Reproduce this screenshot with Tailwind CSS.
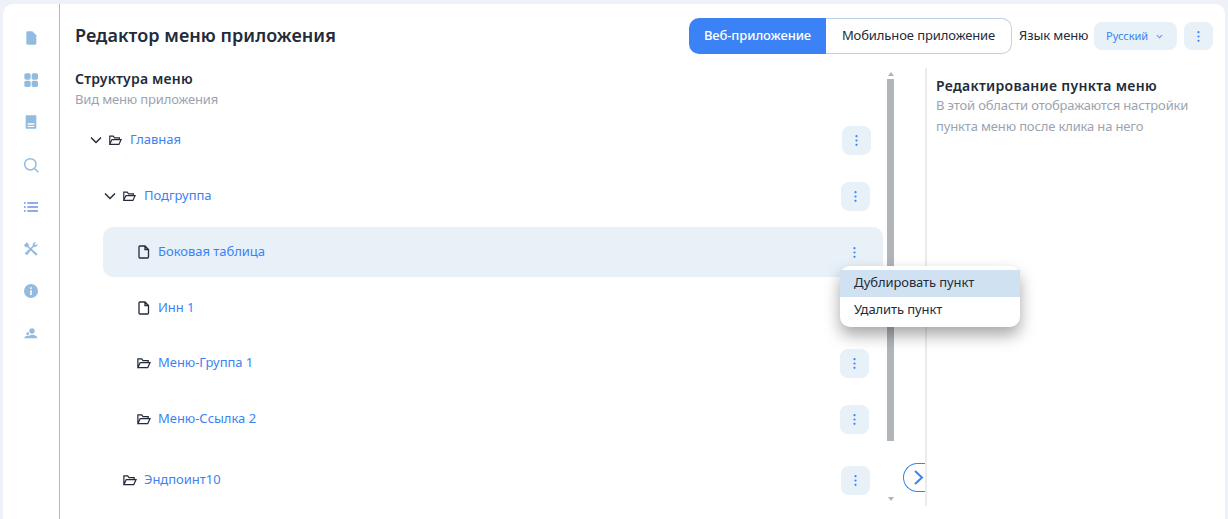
<!DOCTYPE html>
<html lang="ru">
<head>
    <meta charset="UTF-8">
    <script src="https://cdn.jsdelivr.net/npm/@tailwindcss/browser@4"></script>
    <title>Редактор меню приложения</title>
</head>
<body class="bg-[#eef2f8] overflow-hidden font-['Noto_Sans',sans-serif]">
    <!-- card -->
    <div class="relative flex w-[1222px] h-[515px] ml-[3px] mt-[4px] bg-white rounded-tl-[10px] rounded-tr-[10px]">

        <!-- sidebar -->
        <div class="w-[57px] h-full border-r border-[#9dbbd8] flex flex-col items-center pt-[26px] gap-[26px] text-[#93bbe0] shrink-0">
            <svg class="w-[16px] h-[16px]" viewBox="0 0 24 24" fill="currentColor"><path d="M7 2h7l6 6v12a2 2 0 0 1-2 2H7a2 2 0 0 1-2-2V4a2 2 0 0 1 2-2z"/></svg>
            <svg class="w-[16px] h-[16px]" viewBox="0 0 24 24" fill="currentColor"><rect x="2" y="2" width="9.500" height="9.500" rx="2.500"/><rect x="13" y="2" width="9.500" height="9.500" rx="2.500"/><rect x="2" y="13" width="9.500" height="9.500" rx="2.500"/><rect x="13" y="13" width="9.500" height="9.500" rx="2.500"/></svg>
            <svg class="w-[16px] h-[16px]" viewBox="0 0 24 24" fill="currentColor"><path fill-rule="evenodd" d="M5 2h14a1 1 0 0 1 1 1v18a1 1 0 0 1-1 1H5a1 1 0 0 1-1-1V3a1 1 0 0 1 1-1zm2 12v2h10v-2zm0 4v1.500h10V18z"/></svg>
            <svg class="w-[16px] h-[16px] mt-[1px]" viewBox="0 0 24 24" fill="none" stroke="currentColor" stroke-width="2.200"><circle cx="11" cy="11" r="8.500"/><path d="M17 17l6 6"/></svg>
            <svg class="w-[16px] h-[16px]" viewBox="0 0 24 24" fill="none" stroke="#6f90e6" stroke-width="2.200"><path d="M6.500 6h16M6.500 12h16M6.500 18h16M1.500 6h2.500M1.500 12h2.500M1.500 18h2.500"/></svg>
            <svg class="w-[16px] h-[16px]" viewBox="0 0 24 24" fill="currentColor"><path d="M5.500 2l4 4-1.500 1.500L22 19.500 19.500 22 6 8.500 4.500 10 1.500 6.500z"/><path d="M22 3.500a5 5 0 0 1-6 5.500L6 21.500 2.500 18.500 14.500 7.500a5 5 0 0 1 5.500-6L17 4.500l2.500 2z"/></svg>
            <svg class="w-[16px] h-[16px]" viewBox="0 0 24 24" fill="currentColor"><path fill-rule="evenodd" d="M12 1.500a10.500 10.500 0 1 1 0 21 10.500 10.500 0 0 1 0-21zm-1.200 9.500v7h2.400v-7zm0-4.500v2.500h2.400V6.500z"/></svg>
            <svg class="w-[16px] h-[16px]" viewBox="0 0 24 24" fill="currentColor"><circle cx="13.500" cy="9" r="4"/><path d="M2 20c0-2.500 2-4 5-4h2.500c1-1 2.500-1.500 4-1.500 4.500 0 8 2 8 5.500z"/><circle cx="7" cy="13" r="2.200"/></svg>
        </div>

        <!-- main -->
        <div class="flex-1 min-w-0 flex flex-col">

            <!-- top bar -->
            <div class="flex items-center h-[64px] pl-[15px] pr-[12px] shrink-0">
                <h1 class="text-[18px] leading-[26px] mb-[2px] font-semibold tracking-[0.05px] text-[#232b3a]">Редактор меню приложения</h1>
                <div class="ml-auto flex items-center">
                    <div class="flex h-[36px] text-[13px] tracking-[-0.1px]">
                        <div class="w-[137px] bg-[#3b82f6] text-white font-medium rounded-l-[10px] flex items-center justify-center">Веб-приложение</div>
                        <div class="w-[186px] border border-l-0 border-[#bcd3ea] text-[#232b3a] rounded-r-[10px] flex items-center justify-center">Мобильное приложение</div>
                    </div>
                    <span class="ml-[7px] w-[68px] text-[13px] tracking-[-0.1px] whitespace-nowrap text-[#232b3a]">Язык меню</span>
                    <div class="ml-[7px] w-[83px] h-[28px] bg-[#e8f0f8] rounded-[8px] flex items-center pl-[12px] text-[11px] text-[#3b82f6]">
                        Русский
                        <svg class="ml-[8px] w-[7px] h-[5px]" viewBox="0 0 8 5" fill="none" stroke="#6f90e6" stroke-width="1.200"><path d="M1 1l3 3 3-3"/></svg>
                    </div>
                    <div class="ml-[7px] w-[29px] h-[28px] bg-[#e8f0f8] rounded-[8px] flex items-center justify-center">
                        <svg class="w-[3px] h-[11px]" viewBox="0 0 3 11" fill="#3b82f6"><circle cx="1.500" cy="1.200" r="1.100"/><circle cx="1.500" cy="5.500" r="1.100"/><circle cx="1.500" cy="9.800" r="1.100"/></svg>
                    </div>
                </div>
            </div>

            <!-- body -->
            <div class="flex flex-1 min-h-0">

                <!-- tree -->
                <div class="w-[826px] shrink-0 pl-[15px] pt-[1px] tracking-[-0.03px]">
                    <div class="text-[14px] leading-[20px] font-semibold tracking-[0.2px] text-[#232b3a]">Структура меню</div>
                    <div class="text-[13px] leading-[20px] tracking-[-0.15px] text-[#9ca3af]">Вид меню приложения</div>

                    <!-- Главная -->
                    <div class="mt-[6px] flex items-center h-[50px] w-[808px] pl-[14px] pr-[12px]">
                        <svg class="w-[14px] h-[14px] text-[#232b3a] shrink-0" viewBox="0 0 14 14" fill="none" stroke="currentColor" stroke-width="1.500"><path d="M2 4.500l5 5 5-5"/></svg>
                        <svg class="ml-[5px] w-[14px] h-[14px] shrink-0" viewBox="0 0 16 14" fill="none" stroke="#232b3a" stroke-width="1.300"><path d="M2 12V2.500h4l1.500 2H13V6.500M2 12h10.500l2.500-5.500H4.500z"/></svg>
                        <span class="ml-[8px] text-[13px] text-[#3b82f6]">Главная</span>
                        <div class="ml-auto w-[29px] h-[29px] bg-[#e8f0f8] rounded-[8px] flex items-center justify-center">
                            <svg class="w-[3px] h-[11px]" viewBox="0 0 3 11" fill="#3b82f6"><circle cx="1.500" cy="1.200" r="1.100"/><circle cx="1.500" cy="5.500" r="1.100"/><circle cx="1.500" cy="9.800" r="1.100"/></svg>
                        </div>
                    </div>

                    <!-- Подгруппа -->
                    <div class="mt-[6px] ml-[14px] flex items-center h-[50px] w-[794px] pl-[14px] pr-[13px]">
                        <svg class="w-[14px] h-[14px] text-[#232b3a] shrink-0" viewBox="0 0 14 14" fill="none" stroke="currentColor" stroke-width="1.500"><path d="M2 4.500l5 5 5-5"/></svg>
                        <svg class="ml-[5px] w-[14px] h-[14px] shrink-0" viewBox="0 0 16 14" fill="none" stroke="#232b3a" stroke-width="1.300"><path d="M2 12V2.500h4l1.500 2H13V6.500M2 12h10.500l2.500-5.500H4.500z"/></svg>
                        <span class="ml-[8px] text-[13px] text-[#3b82f6]">Подгруппа</span>
                        <div class="ml-auto w-[29px] h-[29px] bg-[#e8f0f8] rounded-[8px] flex items-center justify-center">
                            <svg class="w-[3px] h-[11px]" viewBox="0 0 3 11" fill="#3b82f6"><circle cx="1.500" cy="1.200" r="1.100"/><circle cx="1.500" cy="5.500" r="1.100"/><circle cx="1.500" cy="9.800" r="1.100"/></svg>
                        </div>
                    </div>

                    <!-- Боковая таблица -->
                    <div class="mt-[6px] ml-[28px] flex items-center h-[50px] w-[780px] bg-[#e8f0f8] rounded-[10px] pl-[34px] pr-[14px]">
                        <svg class="w-[14px] h-[14px] shrink-0" viewBox="0 0 14 14" fill="none" stroke="#232b3a" stroke-width="1.300"><path d="M3 1h5l3.500 3.500V12a1 1 0 0 1-1 1H3a1 1 0 0 1-1-1V2a1 1 0 0 1 1-1zM8 1v3.500h3.500"/></svg>
                        <span class="ml-[7px] text-[13px] text-[#3b82f6]">Боковая таблица</span>
                        <div class="ml-auto w-[29px] h-[29px] flex items-center justify-center">
                            <svg class="w-[3px] h-[11px]" viewBox="0 0 3 11" fill="#3b82f6"><circle cx="1.500" cy="1.200" r="1.100"/><circle cx="1.500" cy="5.500" r="1.100"/><circle cx="1.500" cy="9.800" r="1.100"/></svg>
                        </div>
                    </div>

                    <!-- Инн 1 -->
                    <div class="mt-[6px] ml-[28px] flex items-center h-[50px] w-[780px] pl-[34px] pr-[14px]">
                        <svg class="w-[14px] h-[14px] shrink-0" viewBox="0 0 14 14" fill="none" stroke="#232b3a" stroke-width="1.300"><path d="M3 1h5l3.500 3.500V12a1 1 0 0 1-1 1H3a1 1 0 0 1-1-1V2a1 1 0 0 1 1-1zM8 1v3.500h3.500"/></svg>
                        <span class="ml-[7px] text-[13px] text-[#3b82f6]">Инн 1</span>
                    </div>

                    <!-- Меню-Группа 1 -->
                    <div class="mt-[5px] ml-[28px] flex items-center h-[50px] w-[780px] pl-[33px] pr-[14px]">
                        <svg class="w-[15px] h-[14px] shrink-0" viewBox="0 0 16 14" fill="none" stroke="#232b3a" stroke-width="1.300"><path d="M2 12V2.500h4l1.500 2H13V6.500M2 12h10.500l2.500-5.500H4.500z"/></svg>
                        <span class="ml-[7px] text-[13px] text-[#3b82f6]">Меню-Группа 1</span>
                        <div class="ml-auto w-[29px] h-[29px] bg-[#e8f0f8] rounded-[8px] flex items-center justify-center">
                            <svg class="w-[3px] h-[11px]" viewBox="0 0 3 11" fill="#3b82f6"><circle cx="1.500" cy="1.200" r="1.100"/><circle cx="1.500" cy="5.500" r="1.100"/><circle cx="1.500" cy="9.800" r="1.100"/></svg>
                        </div>
                    </div>

                    <!-- Меню-Ссылка 2 -->
                    <div class="mt-[6px] ml-[28px] flex items-center h-[50px] w-[780px] pl-[33px] pr-[14px]">
                        <svg class="w-[15px] h-[14px] shrink-0" viewBox="0 0 16 14" fill="none" stroke="#232b3a" stroke-width="1.300"><path d="M2 12V2.500h4l1.500 2H13V6.500M2 12h10.500l2.500-5.500H4.500z"/></svg>
                        <span class="ml-[7px] text-[13px] text-[#3b82f6]">Меню-Ссылка 2</span>
                        <div class="ml-auto w-[29px] h-[29px] bg-[#e8f0f8] rounded-[8px] flex items-center justify-center">
                            <svg class="w-[3px] h-[11px]" viewBox="0 0 3 11" fill="#3b82f6"><circle cx="1.500" cy="1.200" r="1.100"/><circle cx="1.500" cy="5.500" r="1.100"/><circle cx="1.500" cy="9.800" r="1.100"/></svg>
                        </div>
                    </div>

                    <!-- Эндпоинт10 -->
                    <div class="mt-[11px] ml-[14px] flex items-center h-[50px] w-[794px] pl-[33px] pr-[13px]">
                        <svg class="w-[15px] h-[14px] shrink-0" viewBox="0 0 16 14" fill="none" stroke="#232b3a" stroke-width="1.300"><path d="M2 12V2.500h4l1.500 2H13V6.500M2 12h10.500l2.500-5.500H4.500z"/></svg>
                        <span class="ml-[7px] text-[13px] text-[#3b82f6]">Эндпоинт10</span>
                        <div class="ml-auto w-[29px] h-[29px] bg-[#e8f0f8] rounded-[8px] flex items-center justify-center">
                            <svg class="w-[3px] h-[11px]" viewBox="0 0 3 11" fill="#3b82f6"><circle cx="1.500" cy="1.200" r="1.100"/><circle cx="1.500" cy="5.500" r="1.100"/><circle cx="1.500" cy="9.800" r="1.100"/></svg>
                        </div>
                    </div>
                </div>

                <!-- scrollbar -->
                <div class="w-[7px] h-[429px] ml-[1px] mt-[4px] shrink-0 flex flex-col items-center">
                    <div class="w-0 h-0 border-x-[3px] border-x-transparent border-b-[4px] border-b-[#b0b5ba]"></div>
                    <div class="mt-[3px] w-[7px] h-[362px] bg-[#b0b5ba] shrink-0"></div>
                    <div class="mt-auto w-0 h-0 border-x-[3px] border-x-transparent border-t-[4px] border-t-[#b0b5ba]"></div>
                </div>

                <!-- settings -->
                <div class="ml-[31px] h-[438px] flex-1 border-l-2 border-[#e9ebee] pl-[9px] pt-[8px]">
                    <div class="text-[14px] leading-[20px] font-semibold tracking-[0.3px] text-[#232b3a]">Редактирование пункта меню</div>
                    <div class="-mt-[1px] text-[13px] leading-[21px] tracking-[-0.15px] text-[#9ca3af]">В этой области отображаются настройки<br>пункта меню после клика на него</div>
                </div>
            </div>
        </div>

        <!-- row actions menu -->
        <div class="absolute left-[837px] top-[262px] w-[180px] h-[61px] bg-white rounded-[10px] pt-[4px] shadow-[0_8px_16px_rgba(0,0,0,0.35)] text-[13px] tracking-[-0.1px] text-[#232b3a]">
            <div class="h-[27px] bg-[#d0e2f1] pl-[14px] pb-[1px] flex items-center">Дублировать пункт</div>
            <div class="h-[27px] pl-[14px] pb-[1px] flex items-center">Удалить пункт</div>
        </div>

        <!-- expand button -->
        <div class="absolute left-[900px] top-[459px] w-[22px] h-[29px] border border-r-0 border-[#3b82f6] rounded-l-full bg-white flex items-center justify-end pr-[1px]">
            <svg class="w-[11px] h-[15px]" viewBox="0 0 11 15" fill="none" stroke="#3b82f6" stroke-width="2"><path d="M2 1l7 6.500-7 6.500"/></svg>
        </div>
    </div>
</body>
</html>
